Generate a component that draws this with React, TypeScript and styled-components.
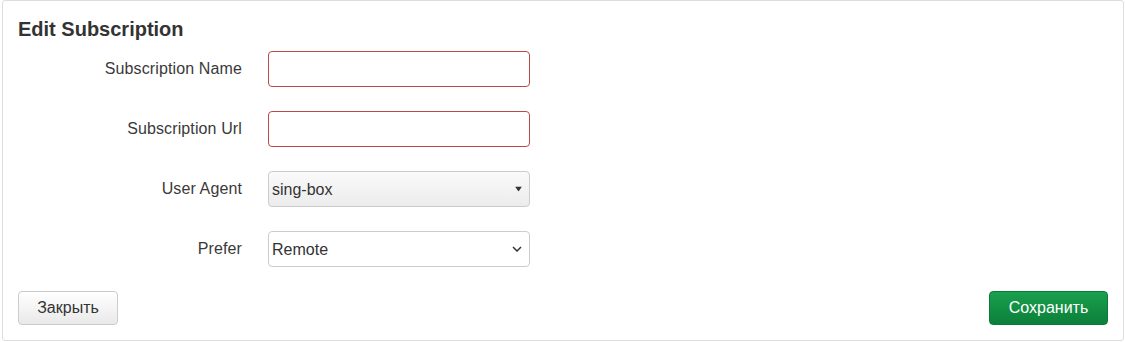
import styled, { createGlobalStyle } from 'styled-components';

const GlobalStyle = createGlobalStyle`
    html, body {
        margin: 0;
        padding: 0;
        background: #ffffff;
    }
    body {
        font-family: "Liberation Sans", Arial, sans-serif;
        color: #333333;
    }
`;

const Panel = styled.div`
    box-sizing: border-box;
    height: 341px;
    margin: 0 1px 0 2px;
    padding: 17px 15px 0 15px;
    border: 1px solid #dddddd;
    border-radius: 3px;
    background: #ffffff;
    display: flex;
    flex-direction: column;
`;

const Title = styled.h3`
    margin: 0 0 11px;
    font-size: 20px;
    line-height: 22px;
    font-weight: bold;
    color: #333333;
`;

const Form = styled.div`
    display: flex;
    flex-direction: column;
    gap: 24px;
`;

const Row = styled.div`
    display: grid;
    grid-template-columns: 224px 262px;
    column-gap: 26px;
    align-items: center;
`;

const Label = styled.label`
    text-align: right;
    font-size: 16px;
    letter-spacing: 0.12px;
    color: #3a3a3a;
`;

const Input = styled.input<{ $invalid?: boolean }>`
    box-sizing: border-box;
    width: 262px;
    height: 36px;
    padding: 4px 6px;
    font: 16px "Liberation Sans", Arial, sans-serif;
    color: #333333;
    background: #ffffff;
    border: 1px solid ${({ $invalid }) => ($invalid ? '#b94a48' : '#cccccc')};
    border-radius: 4px;
    outline: none;
`;

const SelectWrap = styled.div`
    position: relative;
    width: 262px;
    height: 36px;
`;

const Select = styled.select<{ $shaded?: boolean }>`
    box-sizing: border-box;
    appearance: none;
    width: 100%;
    height: 100%;
    padding: 0 24px 0 3px;
    font: 16px "Liberation Sans", Arial, sans-serif;
    color: #333333;
    border: 1px solid #cccccc;
    border-radius: 4px;
    outline: none;
    background: ${({ $shaded }) =>
        $shaded ? 'linear-gradient(#fafafa, #ececec)' : '#ffffff'};
`;

const Arrow = styled.span`
    position: absolute;
    right: 8px;
    top: 50%;
    transform: translateY(-50%);
    display: flex;
    pointer-events: none;
    color: #333333;
`;

const Footer = styled.div`
    margin-top: 24px;
    display: flex;
    justify-content: space-between;
    align-items: center;
`;

const Button = styled.button<{ $primary?: boolean }>`
    box-sizing: border-box;
    height: 34px;
    padding: 0 16px;
    font: 16px "Liberation Sans", Arial, sans-serif;
    border-radius: 4px;
    cursor: pointer;
    color: ${({ $primary }) => ($primary ? '#ffffff' : '#333333')};
    border: 1px solid ${({ $primary }) => ($primary ? '#0b7a36' : '#cccccc')};
    background: ${({ $primary }) =>
        $primary ? 'linear-gradient(#19a04e, #0c7f3a)' : 'linear-gradient(#ffffff, #e9e9e9)'};
`;

const CloseButton = styled(Button)`
    width: 100px;
`;

const SaveButton = styled(Button)`
    width: 119px;
    margin-top: -1px;
`;

export default function App() {
    return (
        <>
            <GlobalStyle />
            <Panel>
                <Title>Edit Subscription</Title>
                <Form>
                    <Row>
                        <Label>Subscription Name</Label>
                        <Input $invalid />
                    </Row>
                    <Row>
                        <Label>Subscription Url</Label>
                        <Input $invalid />
                    </Row>
                    <Row>
                        <Label>User Agent</Label>
                        <SelectWrap>
                            <Select $shaded defaultValue="sing-box">
                                <option>sing-box</option>
                            </Select>
                            <Arrow>
                                <svg width="7" height="5" viewBox="0 0 7 5">
                                    <path d="M0 0h7L3.5 5z" fill="#333" />
                                </svg>
                            </Arrow>
                        </SelectWrap>
                    </Row>
                    <Row>
                        <Label>Prefer</Label>
                        <SelectWrap>
                            <Select defaultValue="Remote">
                                <option>Remote</option>
                            </Select>
                            <Arrow>
                                <svg width="10" height="6" viewBox="0 0 10 6">
                                    <path d="M1 1l4 4 4-4" fill="none" stroke="#333" strokeWidth="1.5" />
                                </svg>
                            </Arrow>
                        </SelectWrap>
                    </Row>
                </Form>
                <Footer>
                    <CloseButton>Закрыть</CloseButton>
                    <SaveButton $primary>Сохранить</SaveButton>
                </Footer>
            </Panel>
        </>
    );
}
